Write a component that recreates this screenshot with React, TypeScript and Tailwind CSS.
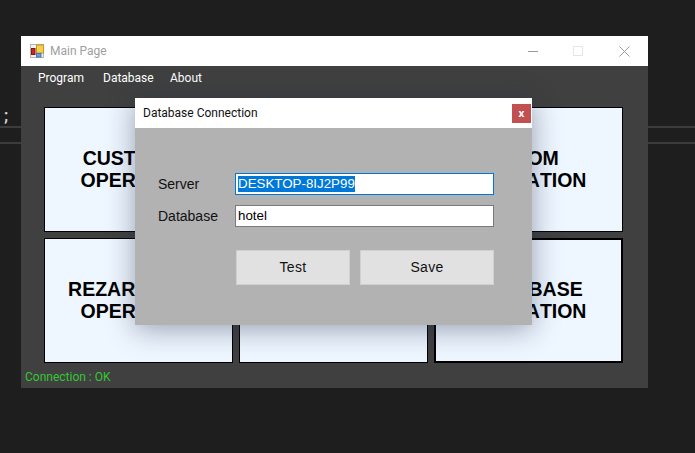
import React from 'react';

const uiFont = "font-['Roboto','Noto_Sans',sans-serif]";
const formFont = "font-['Liberation_Sans',Arial,sans-serif]";

const AppIcon: React.FC = () => (
  <svg width="14" height="14" viewBox="0 0 14 14" className="shrink-0">
    <rect x="0.5" y="0.5" width="13" height="13" fill="#f2f2f2" stroke="#b4b4b4" />
    <rect x="6.5" y="1" width="7" height="8" fill="#f8cf4a" stroke="#c2962a" />
    <rect x="1.5" y="4.5" width="3.5" height="6" fill="#c8281e" stroke="#7c1a14" />
    <rect x="6.5" y="9.5" width="4.5" height="3.5" fill="#6a9ce0" stroke="#4a74b8" />
  </svg>
);

const WindowControls: React.FC = () => (
  <div className="flex h-full items-center pr-px">
    <div className="flex h-full w-[45px] items-center justify-center">
      <div className="h-px w-[10px] bg-[#9a9a9a]" />
    </div>
    <div className="flex h-full w-[46px] items-center justify-center">
      <div className="size-[10px] border border-[#e6e6e6]" />
    </div>
    <div className="flex h-full w-[46px] items-center justify-center">
      <svg width="11" height="11" viewBox="0 0 11 11" stroke="#9a9a9a" strokeWidth="1">
        <path d="M0.5 0.5 10.5 10.5M10.5 0.5 0.5 10.5" />
      </svg>
    </div>
  </div>
);

const Card: React.FC<{ lines?: string[]; active?: boolean }> = ({ lines = [], active }) => (
  <div
    className={`flex h-[125px] w-[189px] flex-col items-center justify-center bg-[#eef6ff] pb-[2px] text-[19.5px] leading-[22px] font-bold text-black [font-kerning:none] ${formFont} ${
      active ? 'border-[2px] border-black' : 'border border-black'
    }`}
  >
    {lines.map((line) => (
      <div key={line}>{line}</div>
    ))}
  </div>
);

const Dialog: React.FC = () => (
  <div className="absolute top-[98px] left-[135px] flex h-[227px] w-[397px] flex-col bg-[#b2b2b2] shadow-[0_4px_26px_rgba(30,40,70,0.42)]">
    <div className="flex h-[30px] shrink-0 items-center justify-between bg-white pr-px pl-2">
      <span className={`text-[12px] text-[#111111] ${uiFont}`}>Database Connection</span>
      <div className="flex size-[19px] items-center justify-center bg-[#c25050] text-[10px] leading-none font-bold text-white">
        x
      </div>
    </div>
    <div className={`flex flex-col pt-[45px] pl-[23px] text-[14px] text-[#111111] ${formFont}`}>
      <div className="flex h-[22px] items-center">
        <span className="w-[77px]">Server</span>
        <div className="flex h-[22px] w-[259px] items-center border border-[#0078d7] bg-white px-[2px] text-[13.33px]">
          <span className="bg-[#0078d7] leading-[16px] text-white">DESKTOP-8IJ2P99</span>
        </div>
      </div>
      <div className="mt-[10px] flex h-[22px] items-center">
        <span className="w-[77px]">Database</span>
        <div className="flex h-[22px] w-[259px] items-center border border-[#7a7a7a] bg-white px-[2px] text-[13.33px] text-black">
          hotel
        </div>
      </div>
      <div className="mt-[23px] ml-[78px] flex gap-[10px] tracking-[0.3px]">
        <div className="flex h-[35px] w-[114px] items-center justify-center border border-[#d0d0d0] bg-[#e1e1e1]">
          Test
        </div>
        <div className="flex h-[35px] w-[134px] items-center justify-center border border-[#d0d0d0] bg-[#e1e1e1]">
          Save
        </div>
      </div>
    </div>
  </div>
);

const App: React.FC = () => {
  return (
    <div className="relative h-[453px] w-[695px] overflow-hidden bg-[#1e1e1e]">
      {/* editor behind the window */}
      <div className={`absolute top-[106px] left-[4px] text-[16px] leading-5 font-bold text-[#d4d4d4] ${uiFont}`}>;</div>
      <div className="absolute top-[126px] left-0 h-[2px] w-full bg-[#3c3c3c]" />
      <div className="absolute top-[142px] left-0 h-[2px] w-full bg-[#3c3c3c]" />

      {/* main window */}
      <div className="absolute top-[36px] left-[21px] flex h-[352px] w-[627px] flex-col bg-[#404040]">
        <div className="flex h-[30px] shrink-0 items-center justify-between bg-white pl-[9px]">
          <div className="flex items-center gap-[6px]">
            <AppIcon />
            <span className={`text-[12px] text-[#a0a0a0] ${uiFont}`}>Main Page</span>
          </div>
          <WindowControls />
        </div>
        <div className={`flex h-[24px] shrink-0 items-center pl-[17px] text-[12px] text-white ${uiFont}`}>
          <span className="w-[65px]">Program</span>
          <span className="w-[67px]">Database</span>
          <span>About</span>
        </div>
        <div className="mt-[17px] ml-[23px] grid w-[579px] grid-cols-[189px_189px_189px] gap-[6px]">
          <Card lines={['CUSTOMER', 'OPERATION']} />
          <Card />
          <Card lines={['ROOM', 'OPERATION']} />
          <Card lines={['REZARVATION', 'OPERATION']} />
          <Card />
          <Card lines={['DATABASE', 'OPERATION']} active />
        </div>
        <div className={`mt-[5px] ml-[4px] text-[12px] leading-[18px] text-[#32c832] ${uiFont}`}>Connection : OK</div>
      </div>

      <Dialog />
    </div>
  );
};

export default App;
